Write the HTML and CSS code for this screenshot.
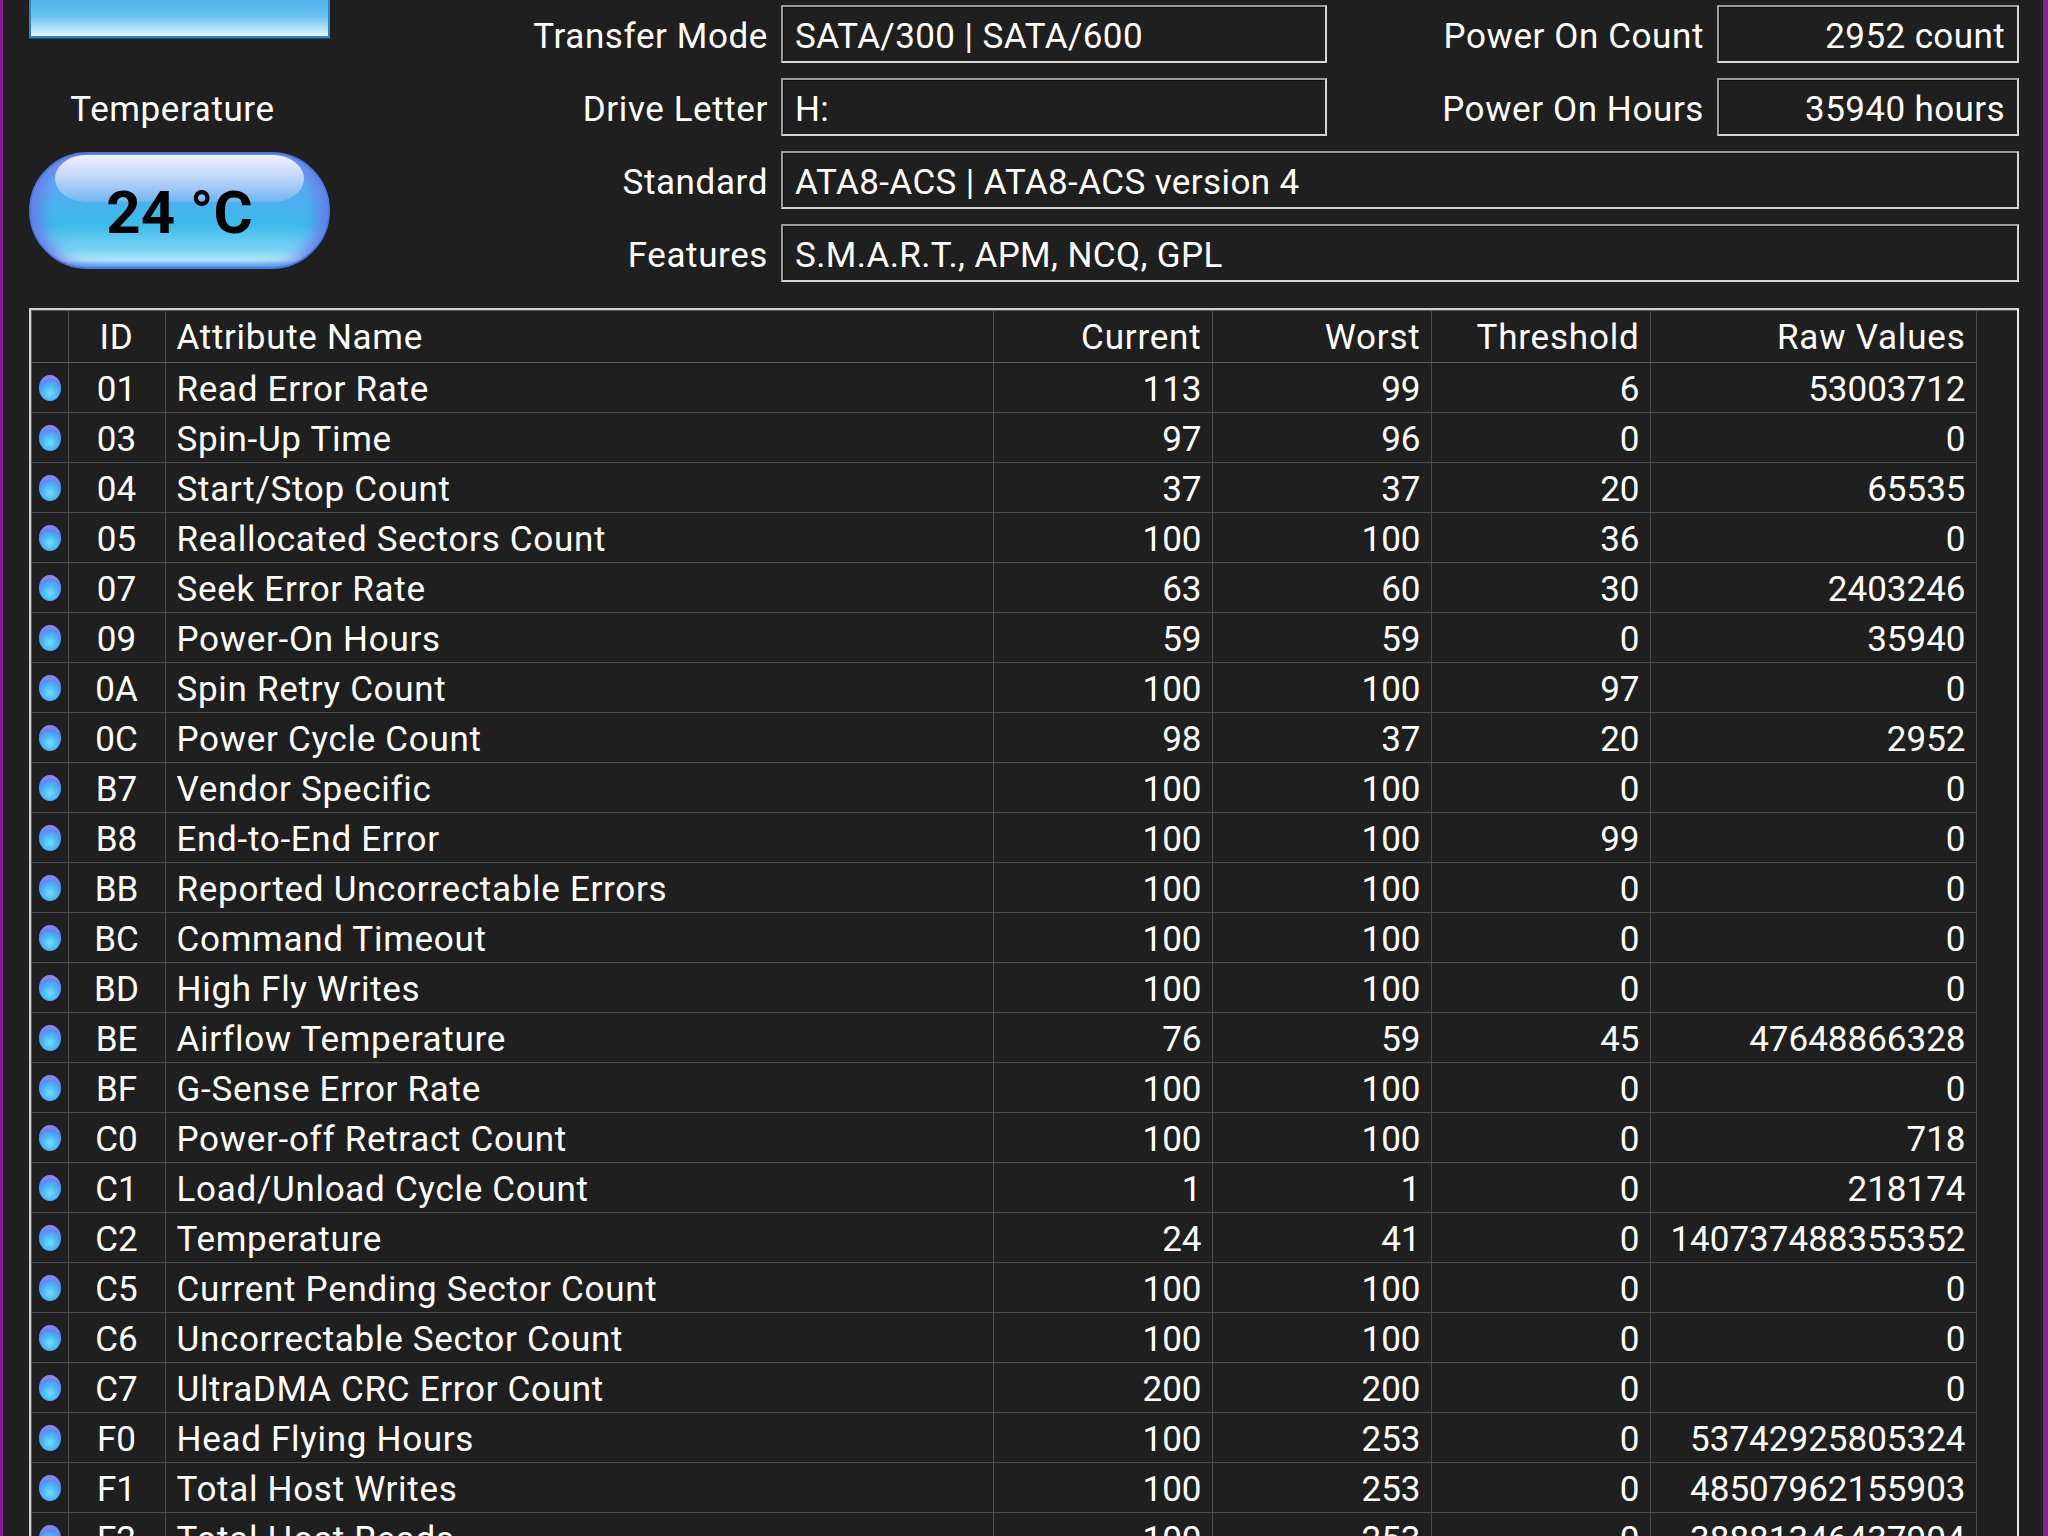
FILE: index.html
```html
<!DOCTYPE html>
<html>
<head>
    <meta charset="utf-8">
    <title>Disk Info</title>
    <link rel="stylesheet" href="styles.css">
</head>
<body>
<div class="frame">

    <div class="top">
        <div class="status">
            <div class="health"></div>
            <div class="temp-label">Temperature</div>
            <div class="temp"><span class="temp-value">24 °C</span></div>
        </div>

        <div class="info">
            <div class="label">Transfer Mode</div>
            <div class="value">SATA/300 | SATA/600</div>
            <div class="label">Power On Count</div>
            <div class="value right">2952 count</div>

            <div class="label">Drive Letter</div>
            <div class="value">H:</div>
            <div class="label">Power On Hours</div>
            <div class="value right">35940 hours</div>

            <div class="label">Standard</div>
            <div class="value wide">ATA8-ACS | ATA8-ACS version 4</div>

            <div class="label">Features</div>
            <div class="value wide">S.M.A.R.T., APM, NCQ, GPL</div>
        </div>
    </div>

    <div class="smart">
        <table>
            <colgroup>
                <col style="width:37px">
                <col style="width:97px">
                <col style="width:828px">
                <col style="width:219px">
                <col style="width:219px">
                <col style="width:219px">
                <col style="width:326px">
            </colgroup>
            <tr>
                <th></th>
                <th class="id">ID</th>
                <th class="name">Attribute Name</th>
                <th>Current</th>
                <th>Worst</th>
                <th>Threshold</th>
                <th>Raw Values</th>
            </tr>
            <tr><td><span class="dot"></span></td><td class="id">01</td><td class="name">Read Error Rate</td><td>113</td><td>99</td><td>6</td><td>53003712</td></tr>
            <tr><td><span class="dot"></span></td><td class="id">03</td><td class="name">Spin-Up Time</td><td>97</td><td>96</td><td>0</td><td>0</td></tr>
            <tr><td><span class="dot"></span></td><td class="id">04</td><td class="name">Start/Stop Count</td><td>37</td><td>37</td><td>20</td><td>65535</td></tr>
            <tr><td><span class="dot"></span></td><td class="id">05</td><td class="name">Reallocated Sectors Count</td><td>100</td><td>100</td><td>36</td><td>0</td></tr>
            <tr><td><span class="dot"></span></td><td class="id">07</td><td class="name">Seek Error Rate</td><td>63</td><td>60</td><td>30</td><td>2403246</td></tr>
            <tr><td><span class="dot"></span></td><td class="id">09</td><td class="name">Power-On Hours</td><td>59</td><td>59</td><td>0</td><td>35940</td></tr>
            <tr><td><span class="dot"></span></td><td class="id">0A</td><td class="name">Spin Retry Count</td><td>100</td><td>100</td><td>97</td><td>0</td></tr>
            <tr><td><span class="dot"></span></td><td class="id">0C</td><td class="name">Power Cycle Count</td><td>98</td><td>37</td><td>20</td><td>2952</td></tr>
            <tr><td><span class="dot"></span></td><td class="id">B7</td><td class="name">Vendor Specific</td><td>100</td><td>100</td><td>0</td><td>0</td></tr>
            <tr><td><span class="dot"></span></td><td class="id">B8</td><td class="name">End-to-End Error</td><td>100</td><td>100</td><td>99</td><td>0</td></tr>
            <tr><td><span class="dot"></span></td><td class="id">BB</td><td class="name">Reported Uncorrectable Errors</td><td>100</td><td>100</td><td>0</td><td>0</td></tr>
            <tr><td><span class="dot"></span></td><td class="id">BC</td><td class="name">Command Timeout</td><td>100</td><td>100</td><td>0</td><td>0</td></tr>
            <tr><td><span class="dot"></span></td><td class="id">BD</td><td class="name">High Fly Writes</td><td>100</td><td>100</td><td>0</td><td>0</td></tr>
            <tr><td><span class="dot"></span></td><td class="id">BE</td><td class="name">Airflow Temperature</td><td>76</td><td>59</td><td>45</td><td>47648866328</td></tr>
            <tr><td><span class="dot"></span></td><td class="id">BF</td><td class="name">G-Sense Error Rate</td><td>100</td><td>100</td><td>0</td><td>0</td></tr>
            <tr><td><span class="dot"></span></td><td class="id">C0</td><td class="name">Power-off Retract Count</td><td>100</td><td>100</td><td>0</td><td>718</td></tr>
            <tr><td><span class="dot"></span></td><td class="id">C1</td><td class="name">Load/Unload Cycle Count</td><td>1</td><td>1</td><td>0</td><td>218174</td></tr>
            <tr><td><span class="dot"></span></td><td class="id">C2</td><td class="name">Temperature</td><td>24</td><td>41</td><td>0</td><td>140737488355352</td></tr>
            <tr><td><span class="dot"></span></td><td class="id">C5</td><td class="name">Current Pending Sector Count</td><td>100</td><td>100</td><td>0</td><td>0</td></tr>
            <tr><td><span class="dot"></span></td><td class="id">C6</td><td class="name">Uncorrectable Sector Count</td><td>100</td><td>100</td><td>0</td><td>0</td></tr>
            <tr><td><span class="dot"></span></td><td class="id">C7</td><td class="name">UltraDMA CRC Error Count</td><td>200</td><td>200</td><td>0</td><td>0</td></tr>
            <tr><td><span class="dot"></span></td><td class="id">F0</td><td class="name">Head Flying Hours</td><td>100</td><td>253</td><td>0</td><td>53742925805324</td></tr>
            <tr><td><span class="dot"></span></td><td class="id">F1</td><td class="name">Total Host Writes</td><td>100</td><td>253</td><td>0</td><td>48507962155903</td></tr>
            <tr><td><span class="dot"></span></td><td class="id">F2</td><td class="name">Total Host Reads</td><td>100</td><td>253</td><td>0</td><td>38881346437904</td></tr>
        </table>
    </div>

</div>
</body>
</html>
```

FILE: styles.css
```css
* {
    box-sizing: border-box;
}

body {
    margin: 0;
    background: #1f1f1f;
    font-family: Roboto, "Liberation Sans", sans-serif;
    color: #ffffff;
}

.frame {
    width: 2048px;
    height: 1536px;
    overflow: hidden;
    background: #1f1f1f;
    border-left: 3px solid #8a1b9a;
    border-right: 5px solid #8a1b9a;
    padding: 0 24px 0 26px;
}

.top {
    display: flex;
    height: 282px;
    margin-bottom: 26px;
}

.status {
    width: 301px;
    flex: none;
    display: flex;
    flex-direction: column;
    align-items: center;
}

.health {
    width: 301px;
    height: 38px;
    background: linear-gradient(to bottom, #4fb2ea 0%, #68c2ef 45%, #cdeefb 90%, #e6f8fe 100%);
    border: 2px solid #2f86c6;
    border-top: none;
    box-shadow: 0 1px 0 #174a70;
}

.temp-label {
    margin-top: 50px;
    height: 44px;
    line-height: 44px;
    font-size: 35px;
    letter-spacing: 0.6px;
    padding-right: 14px;
}

.temp {
    position: relative;
    margin-top: 20px;
    width: 301px;
    height: 117px;
    border-radius: 59px;
    border: 2px solid #4a78e0;
    background: linear-gradient(to bottom, #6fa4f2 0%, #4ab2ee 45%, #3bbaeb 62%, #7fd4f6 86%, #b9ecfb 94%, #4aaeea 100%);
    box-shadow: inset 14px 0 16px -6px #6c78ea, inset -14px 0 16px -6px #6c78ea;
    overflow: hidden;
    text-align: center;
}

.temp::before {
    content: "";
    position: absolute;
    left: 24px;
    right: 24px;
    top: 1px;
    height: 47px;
    border-radius: 40px 40px 40px 40px / 30px 30px 30px 30px;
    background: linear-gradient(to bottom, rgba(246, 246, 255, 0.95) 0%, rgba(222, 228, 252, 0.8) 45%, rgba(170, 196, 244, 0.35) 100%);
}

.temp-value {
    position: relative;
    display: block;
    color: #000000;
    font-size: 60px;
    font-weight: bold;
    line-height: 113px;
    padding-top: 2px;
}

.info {
    display: grid;
    grid-template-columns: 438px 546px 364px 302px;
    grid-auto-rows: 58px;
    column-gap: 13px;
    row-gap: 15px;
    padding-top: 5px;
}

.label {
    text-align: right;
    font-size: 35px;
    letter-spacing: 0.6px;
    line-height: 58px;
    padding-top: 3px;
    white-space: nowrap;
}

.value {
    border: 2px solid #9c9c9c;
    border-right-color: #d6d6d6;
    border-bottom-color: #d6d6d6;
    box-shadow: inset 1px 1px 0 #101010;
    font-size: 35px;
    letter-spacing: 0.4px;
    line-height: 54px;
    padding: 3px 12px 0 12px;
    white-space: nowrap;
}

.value.right {
    text-align: right;
}

.value.wide {
    grid-column: 2 / 5;
}

.smart {
    height: 1300px;
    border: 2px solid #d0d0d0;
    border-right-color: #e8e8e8;
    box-shadow: inset 1px 1px 0 #5a5a5a;
    overflow: hidden;
}

table {
    border-collapse: collapse;
    table-layout: fixed;
    width: 1945px;
}

th, td {
    height: 50px;
    padding: 4px 10px 0 10px;
    font-size: 35px;
    font-weight: normal;
    text-align: right;
    border-right: 1px solid #4c4c4c;
    border-bottom: 1px solid #4c4c4c;
    white-space: nowrap;
    overflow: hidden;
}

th {
    height: 52px;
    letter-spacing: 0.8px;
    border-bottom-color: #5e5e5e;
}

th:first-child, td:first-child {
    padding: 0;
    text-align: center;
}

.id {
    text-align: center;
}

.name {
    text-align: left;
    padding-left: 11px;
    letter-spacing: 0.7px;
}

.dot {
    display: inline-block;
    vertical-align: middle;
    width: 22px;
    height: 26px;
    border-radius: 50%;
    margin-left: 2px;
    margin-top: -2px;
    background: radial-gradient(ellipse 70% 60% at 50% 68%, #74e0fc 0%, #4cb8f6 45%, #5a8cf0 80%, #8e84ee 100%), #9a8cf0;
    box-shadow: 0 0 1px #2a3a80;
}
```
